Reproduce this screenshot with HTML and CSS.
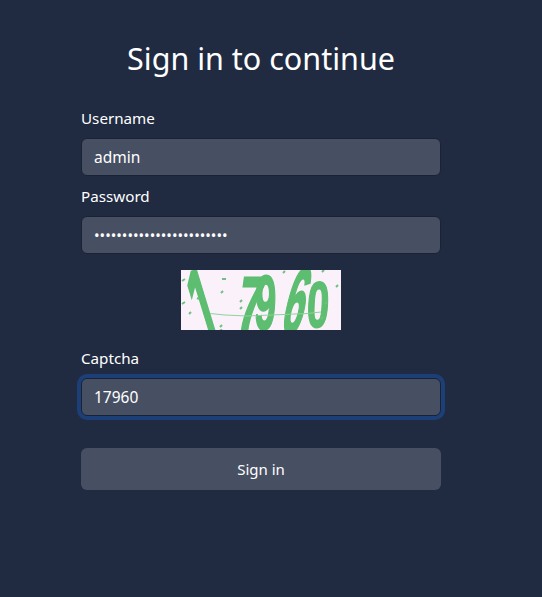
FILE: index.html
```html
<!DOCTYPE html>
<html>
<head>
  <title>Sign in</title>
  <link rel="stylesheet" href="styles.css">
</head>
<body>
  <div class="login">
    <h1 class="title">Sign in to continue</h1>
    <form class="form">
      <label class="label" for="username">Username</label>
      <input class="input" type="text" id="username" value="admin">

      <label class="label" for="password">Password</label>
      <input class="input passwordInput" type="password" id="password" value="adminadminadminadminadmi">

      <svg class="captcha" viewBox="0 0 160 60" width="160" height="60" role="img" aria-label="captcha">
        <rect width="160" height="60" fill="#fbf1fb"/>
        <g class="captchaText">
          <text transform="translate(23 78) rotate(-17) scale(0.7 1.85)" font-size="60">1</text>
          <text transform="translate(54 61) skewX(-8) scale(0.76 1.34)" font-size="58">7</text>
          <text transform="translate(73 59) skewX(-2) scale(0.66 1.32)" font-size="58">9</text>
          <text transform="translate(98 63) skewX(-14) scale(0.62 1.55)" font-size="60">6</text>
          <text transform="translate(125 57) skewX(-3) scale(0.66 1.08)" font-size="60">0</text>
        </g>
        <path class="captchaLine" d="M29 43.5 L44 45 L66 46 L126 43.5 L140 42"/>
        <path class="captchaDots" d="M1 11l3-2M41 9h4M40 23l2-2M1 34l3-2M8 44l2-2M16 28l2 1M39 57l2-2M59 32l2-2M59 39l2-2M75 45h2M102 3l2-2M141 2l2-2M155 17l2-2M144 34l2-2M140 49l2-2"/>
      </svg>

      <label class="label" for="captcha">Captcha</label>
      <input class="input focused" type="text" id="captcha" value="17960">

      <button type="button" class="buttonSignIn">Sign in</button>
    </form>
  </div>
</body>
</html>
```

FILE: styles.css
```css
* {
  margin: 0;
  box-sizing: border-box;
  font-family: "Noto Sans", "Open Sans", sans-serif;
}

body {
  min-height: 597px;
  background-color: #202b42;
  color: #fff;
}

.login {
  width: 360px;
  margin-left: 81px;
  padding-top: 38px;
}

.title {
  font-size: 30.5px;
  font-weight: 400;
  line-height: 40px;
  text-align: center;
  margin-bottom: 29px;
}

.form {
  display: flex;
  flex-direction: column;
}

.label {
  font-size: 15.2px;
  line-height: 22px;
  margin-bottom: 9px;
}

.input {
  width: 100%;
  height: 38px;
  padding: 0 12px;
  margin-bottom: 9px;
  font-size: 15.5px;
  color: #fff;
  background-color: #475063;
  border: 1px solid #1a2235;
  border-radius: 6px;
  outline: none;
}

.passwordInput {
  font-size: 14.8px;
}

.focused {
  box-shadow: 0 0 0 4px #1d3f78;
}

.captcha {
  display: block;
  margin: 7px auto 17px;
}

.captchaText text {
  font-family: "Liberation Sans", sans-serif;
  font-weight: 700;
  fill: #5dbd70;
  stroke: #5dbd70;
  stroke-width: 1.6;
}

.captchaLine {
  fill: none;
  stroke: #8fd29c;
  stroke-width: 1;
}

.captchaDots {
  fill: none;
  stroke: #6cc27e;
  stroke-width: 2;
}

.buttonSignIn {
  height: 42px;
  margin-top: 23px;
  font-size: 15px;
  color: #fff;
  background-color: #475063;
  border: none;
  border-radius: 6px;
  cursor: pointer;
}
```
